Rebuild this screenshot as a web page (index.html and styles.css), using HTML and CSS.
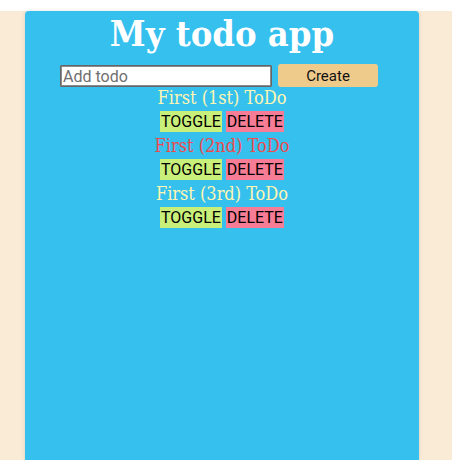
FILE: index.html
```html
<!DOCTYPE html>
<html>
<head>
<meta charset="utf-8">
<link rel="stylesheet" href="styles.css">
</head>
<body>
<div class="page">
  <div class="card">
    <h1 class="title">My todo app</h1>
    <form class="add-form">
      <input class="add-input" type="text" placeholder="Add todo">
      <button class="btn-create" type="button">Create</button>
    </form>
    <ul class="todos">
      <li class="todo">
        <div class="todo-text">First (1st) ToDo</div>
        <div class="todo-actions"><button class="btn btn-toggle" type="button">TOGGLE</button><button class="btn btn-delete" type="button">DELETE</button></div>
      </li>
      <li class="todo done">
        <div class="todo-text">First (2nd) ToDo</div>
        <div class="todo-actions"><button class="btn btn-toggle" type="button">TOGGLE</button><button class="btn btn-delete" type="button">DELETE</button></div>
      </li>
      <li class="todo">
        <div class="todo-text">First (3rd) ToDo</div>
        <div class="todo-actions"><button class="btn btn-toggle" type="button">TOGGLE</button><button class="btn btn-delete" type="button">DELETE</button></div>
      </li>
    </ul>
  </div>
</div>
</body>
</html>
```
FILE: styles.css
```css
html, body {
  margin: 0;
  padding: 0;
  background: #ffffff;
  height: 100%;
}
.page {
  margin-top: 11px;
  background: #faebd7;
  min-height: 449px;
  display: flex;
  padding-left: 25px;
}
.card {
  width: 394px;
  background: #36c0ee;
  border-radius: 4px 4px 0 0;
  box-shadow: 0 0 4px rgba(0,0,0,0.12);
  display: flex;
  flex-direction: column;
  align-items: center;
}
.title {
  margin: 0;
  font-family: "DejaVu Serif Condensed", "DejaVu Serif", serif;
  font-stretch: condensed;
  font-weight: bold;
  font-size: 36px;
  line-height: 44px;
  color: #ffffff;
}
.add-form {
  display: flex;
  gap: 6px;
  margin: 9px 6px 0 0;
  align-items: flex-start;
}
.add-input {
  width: 212px;
  height: 22px;
  margin-top: 1px;
  box-sizing: border-box;
  border: 1px solid #666;
  outline: 1px solid #8a8a8a;
  outline-offset: -2px;
  border-radius: 1px;
  padding: 0 2px;
  font-family: Roboto, sans-serif;
  font-size: 16px;
  color: #000;
  background: #fff;
}
.add-input::placeholder {
  color: #6f6f6f;
}
.btn-create {
  width: 100px;
  height: 23px;
  border: none;
  border-radius: 3px;
  background: #eecb8b;
  font-family: Roboto, sans-serif;
  font-size: 15px;
  color: #111;
  padding: 0;
}
.todos {
  list-style: none;
  margin: 0;
  padding: 0;
  display: flex;
  flex-direction: column;
  align-items: center;
}
.todo {
  display: flex;
  flex-direction: column;
  align-items: center;
}
.todo-text {
  font-family: "DejaVu Serif Condensed", "DejaVu Serif", serif;
  font-stretch: condensed;
  font-size: 18px;
  line-height: 22px;
  color: #fff6b2;
}
.done .todo-text {
  color: #ec4c4e;
}
.todo-actions {
  display: flex;
  gap: 4px;
  margin-top: 2px;
  margin-bottom: 3px;
}
.btn {
  height: 21px;
  border: none;
  padding: 0 1px;
  font-family: Roboto, sans-serif;
  font-size: 16px;
  color: #000;
  border-radius: 0;
}
.btn-toggle {
  background: #c8ef7a;
}
.btn-delete {
  background: #f77c95;
}
```
